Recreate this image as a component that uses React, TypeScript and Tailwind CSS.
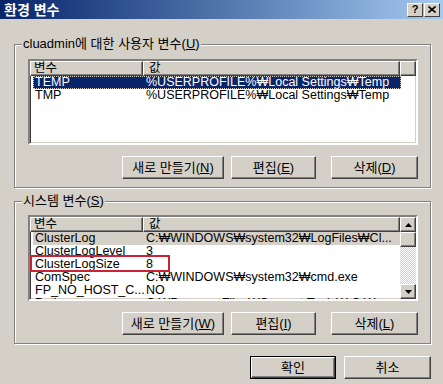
import React from 'react';

const font = "font-['Liberation_Sans','Noto_Sans_CJK_KR',sans-serif]";

interface Row {
  name: string;
  value: string;
  state?: 'active' | 'inactive';
}

const userRows: Row[] = [
  { name: 'TEMP', value: '%USERPROFILE%₩Local Settings₩Temp', state: 'active' },
  { name: 'TMP', value: '%USERPROFILE%₩Local Settings₩Temp' },
];

const systemRows: Row[] = [
  { name: 'ClusterLog', value: 'C:₩WINDOWS₩system32₩LogFiles₩Cl...', state: 'inactive' },
  { name: 'ClusterLogLevel', value: '3' },
  { name: 'ClusterLogSize', value: '8' },
  { name: 'ComSpec', value: 'C:₩WINDOWS₩system32₩cmd.exe' },
  { name: 'FP_NO_HOST_C...', value: 'NO' },
  { name: 'Path', value: 'C:₩Program Files₩Support Tools₩;C:₩...' },
];

function Mnemonic({ label, k }: { label: string; k: string }) {
  return (
    <>
      {label}(<span className="underline underline-offset-1">{k}</span>)
    </>
  );
}

function Button({ children, w, isDefault }: { children: React.ReactNode; w: string; isDefault?: boolean }) {
  return (
    <div
      className={`${w} h-[23px] flex items-center justify-center text-[13px] text-black ${
        isDefault ? 'border border-black' : ''
      }`}
    >
      <div className="w-full h-full flex items-center justify-center border border-t-white border-l-white border-b-[#404040] border-r-[#404040] shadow-[inset_-1px_-1px_0_#808080]">
        {children}
      </div>
    </div>
  );
}

function HeaderCell({ children, w }: { children?: React.ReactNode; w: string }) {
  return (
    <div className={`${w} h-[15px] flex items-center pl-[3px] text-[12.5px] leading-[13px] border border-t-white border-l-white border-b-[#404040] border-r-[#404040] shadow-[inset_-1px_-1px_0_#808080] bg-[#d4d0c8]`}>
      {children}
    </div>
  );
}

function ListRow({ row }: { row: Row }) {
  const bg =
    row.state === 'active'
      ? 'bg-[#0a246a] text-white outline outline-1 outline-dotted outline-[#d4d0c8] -outline-offset-1'
      : row.state === 'inactive'
        ? 'bg-[#d4d0c8] text-black'
        : 'text-black';
  return (
    <div className="h-[13px] pl-[3px] flex">
      <div className={`w-[368px] h-[13px] flex items-center text-[12.5px] leading-none whitespace-nowrap ${bg}`}>
        <span className="w-[113px] pl-[2px] overflow-hidden">{row.name}</span>
        <span className="flex-1 overflow-hidden">{row.value}</span>
      </div>
    </div>
  );
}

function Arrow({ up }: { up?: boolean }) {
  return (
    <div className="w-[16px] h-[15px] flex items-center justify-center bg-[#d4d0c8] border border-t-white border-l-white border-b-[#404040] border-r-[#404040] shadow-[inset_-1px_-1px_0_#808080]">
      <svg width="7" height="4" viewBox="0 0 7 4">
        {up ? <path d="M3.5 0 L7 4 L0 4 Z" fill="#000" /> : <path d="M0 0 L7 0 L3.5 4 Z" fill="#000" />}
      </svg>
    </div>
  );
}

const sunken =
  'border-2 border-t-[#808080] border-l-[#808080] border-b-white border-r-white shadow-[inset_1px_1px_0_#404040,inset_-1px_-1px_0_#d4d0c8] bg-white';

function Group({ title, children, mt }: { title: React.ReactNode; children: React.ReactNode; mt: string }) {
  return (
    <div className={`${mt} ml-[14px] mr-[12px] border border-[#808080] shadow-[inset_1px_1px_0_#fff,1px_1px_0_#fff] pl-[13px] pr-[12px] pb-[8px]`}>
      <div className="-mt-[8px] -ml-[6px] w-fit bg-[#d4d0c8] px-[1px] h-[14px] leading-[14px] text-[13px] text-black">
        {title}
      </div>
      {children}
    </div>
  );
}

export default function App() {
  return (
    <div className={`w-[443px] h-[384px] bg-[#d4d0c8] flex flex-col overflow-hidden ${font}`}>
      {/* Title bar */}
      <div className="h-[19px] bg-linear-to-r from-[#0a246a] to-[#a6caf0] flex items-center pl-[4px] pr-[3px]">
        <span className="text-white font-bold text-[14px] leading-none">환경 변수</span>
        <div className="ml-auto flex gap-[1px]">
          <div className="w-[16px] h-[14px] flex items-center justify-center bg-[#d4d0c8] border border-t-white border-l-white border-b-[#404040] border-r-[#404040] text-[11px] font-bold leading-none">?</div>
          <div className="w-[16px] h-[14px] flex items-center justify-center bg-[#d4d0c8] border border-t-white border-l-white border-b-[#404040] border-r-[#404040]">
            <svg width="8" height="7" viewBox="0 0 8 7">
              <path d="M0.5 0.5 L7.5 6.5 M7.5 0.5 L0.5 6.5" stroke="#000" strokeWidth="1.6" />
            </svg>
          </div>
        </div>
      </div>

      {/* User variables */}
      <Group mt="mt-[25px]" title={<Mnemonic label="cluadmin에 대한 사용자 변수" k="U" />}>
        <div className={`mt-[8px] w-[390px] h-[86px] ${sunken} flex flex-col overflow-hidden`}>
          <div className="flex">
            <HeaderCell w="w-[113px]">변수</HeaderCell>
            <HeaderCell w="w-[257px]">
              <span className="pl-[2px]">값</span>
            </HeaderCell>
            <HeaderCell w="flex-1" />
          </div>
          {userRows.map((r) => (
            <ListRow key={r.name} row={r} />
          ))}
        </div>
        <div className="mt-[11px] flex justify-end gap-[7px]">
          <Button w="w-[102px]"><Mnemonic label="새로 만들기" k="N" /></Button>
          <Button w="w-[85px]"><Mnemonic label="편집" k="E" /></Button>
          <div className="w-[1px]" />
          <Button w="w-[87px]"><Mnemonic label="삭제" k="D" /></Button>
        </div>
      </Group>

      {/* System variables */}
      <Group mt="mt-[13px]" title={<Mnemonic label="시스템 변수" k="S" />}>
        <div className={`mt-[7px] w-[390px] h-[86px] ${sunken} flex overflow-hidden`}>
          <div className="flex-1 flex flex-col overflow-hidden">
            <div className="flex">
              <HeaderCell w="w-[113px]">변수</HeaderCell>
              <HeaderCell w="flex-1">
                <span className="pl-[2px]">값</span>
              </HeaderCell>
            </div>
            <div className="relative">
              {systemRows.map((r) => (
                <ListRow key={r.name} row={r} />
              ))}
              <div className="absolute left-0 top-[23px] w-[140px] h-[17px] border-2 border-[#cc2233]" />
            </div>
          </div>
          <div className="w-[16px] flex flex-col">
            <Arrow up />
            <div className="h-[15px] bg-[#d4d0c8] border border-t-white border-l-white border-b-[#404040] border-r-[#404040] shadow-[inset_-1px_-1px_0_#808080]" />
            <div className="flex-1 bg-[image:repeating-conic-gradient(#ffffff_0_25%,#d4d0c8_0_50%)] bg-[length:2px_2px]" />
            <Arrow />
          </div>
        </div>
        <div className="mt-[11px] flex justify-end gap-[7px]">
          <Button w="w-[102px]"><Mnemonic label="새로 만들기" k="W" /></Button>
          <Button w="w-[85px]"><Mnemonic label="편집" k="I" /></Button>
          <div className="w-[1px]" />
          <Button w="w-[87px]"><Mnemonic label="삭제" k="L" /></Button>
        </div>
      </Group>

      {/* Dialog buttons */}
      <div className="mt-[12px] mr-[12px] flex justify-end gap-[8px]">
        <Button w="w-[86px]" isDefault>확인</Button>
        <Button w="w-[87px]">취소</Button>
      </div>
    </div>
  );
}
